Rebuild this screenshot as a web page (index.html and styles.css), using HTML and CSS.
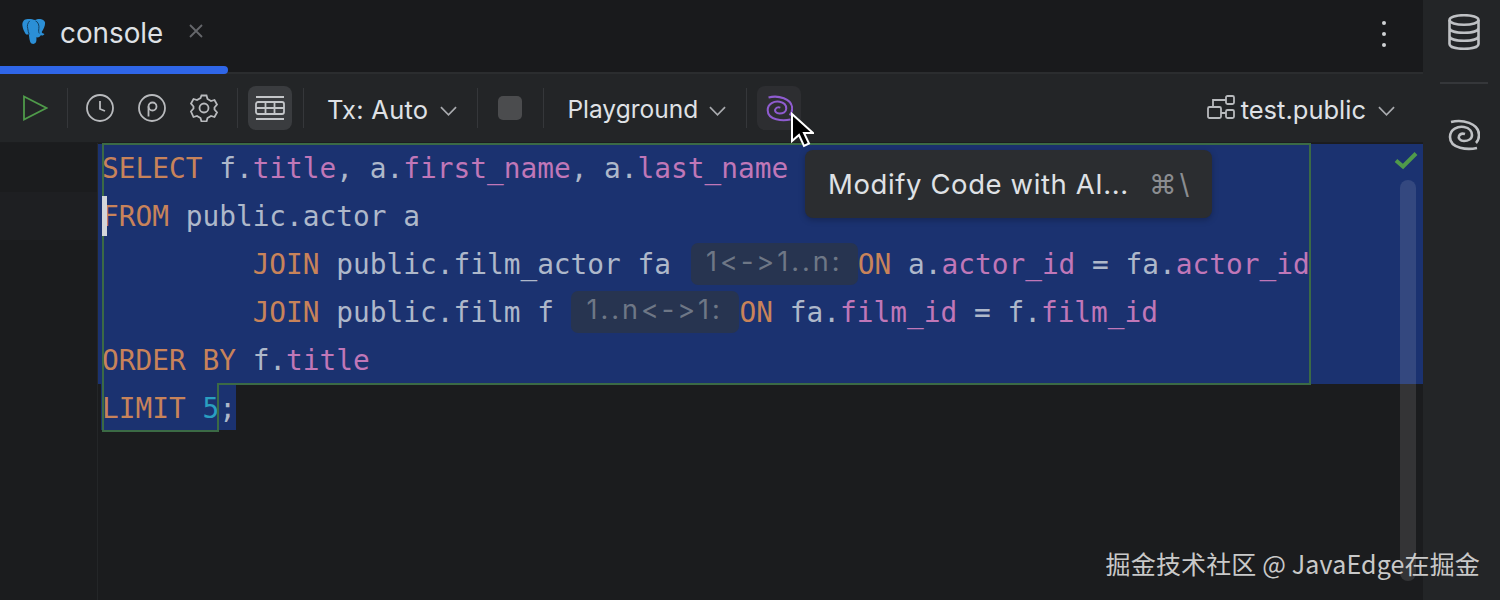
FILE: index.html
```html
<!DOCTYPE html>
<html lang="en">
<head>
<meta charset="utf-8">
<title>console</title>
<link rel="stylesheet" href="styles.css">
</head>
<body>
<div class="app">
  <div class="main">
    <div class="tabbar">
      <div class="tab">
        <svg class="pg" viewBox="0 0 28 28"><path fill="#2b8fd6" d="M7 1C3 1 1 4 1.500 8c.4 3 1.700 6 3 8 1 1.500 2.500 1.500 3.500.5.500 2 .5 5 1.500 8 .8 2.500 4 3 5.500 1.500 1.300-1.300 1-4 1-6 2 .5 4-.5 4.500-2 2 .5 3.500-.5 3.800-1.500-1.500-.5-2.500-1-2.800-2 2-3 3.500-6 3.500-9.500C24.800 2.500 21.500 1 19 1c-2 0-3 .5-4.500 1.200C12.500 1.200 9.500.8 7 1z"/><path fill="none" stroke="#123c5c" stroke-width="1" d="M9 3c-2 2-3 5-2 8 .5 2 .5 4 1.500 6M15 3c3 1 4 5 3.500 8-.3 2-.3 4 .5 5"/></svg>
        <span class="tab-name">console</span>
        <svg class="close" viewBox="0 0 16 16"><path d="M2 2l12 12M14 2L2 14"/></svg>
      </div>
      <div class="spacer"></div>
      <div class="dots"><i></i><i></i><i></i></div>
    </div>
    <div class="toolbar">
      <svg class="ic play" viewBox="0 0 26 26"><path d="M2 1.500L24.500 13 2 24.500z"/></svg>
      <span class="sep s-a"></span>
      <span class="slot"><svg class="ic" viewBox="0 0 28 28"><circle cx="14" cy="14" r="13"/><path d="M14 7v8l5 2"/></svg></span>
      <span class="slot"><svg class="ic" viewBox="0 0 28 28"><circle cx="14" cy="14" r="13"/><path d="M10.500 22.500V12.500"/><circle cx="14.500" cy="12.500" r="4"/></svg></span>
      <span class="slot"><svg class="ic" viewBox="0 0 28 28"><path d="M11.500 1.500h5l1 3.500 3.500 2 3.500-1 2.500 4.500-2.500 3 .0 1-.0 1 2.500 3-2.500 4.500-3.500-1-3.500 2-1 3.500h-5l-1-3.500-3.500-2-3.500 1L1 17.500l2.500-3v-2L1 9.500 3.500 5 7 6l3.500-2z"/><circle cx="14" cy="14" r="4.500"/></svg></span>
      <span class="sep s-b"></span>
      <span class="btn active s-c"><svg class="ic grid" viewBox="0 0 30 26"><path d="M1 2h28M1 24h28M3 7h24a2 2 0 0 1 2 2v8a2 2 0 0 1-2 2H3a2 2 0 0 1-2-2V9a2 2 0 0 1 2-2zM1 13h28M10.500 7v12M19.500 7v12"/></svg></span>
      <span class="sep s-d"></span>
      <span class="label tx s-e">Tx: Auto</span>
      <svg class="chev s-f" viewBox="0 0 18 10"><path d="M1 1l8 8 8-8"/></svg>
      <span class="sep s-g"></span>
      <span class="stop"></span>
      <span class="sep s-l"></span>
      <span class="label pgd s-e">Playground</span>
      <svg class="chev s-h" viewBox="0 0 18 10"><path d="M1 1l8 8 8-8"/></svg>
      <span class="sep s-g"></span>
      <span class="btn hover s-c"><svg class="ic ai" viewBox="0 0 32 32"><path d="M29 29C20 31 2 30 2 18 2 10 10 7 16 8c6 1 8 5 8 8 0 4-4 6-8 6-4 0-6-3-5-5 1-2 3-3 6-2"/><path d="M3 3c11-3 28 1 28 13 0 4-1 6-3 8"/></svg></span>
      <div class="spacer"></div>
      <svg class="ic schema" viewBox="0 0 28 24"><rect x="1" y="12" width="13" height="11" rx="1.500"/><rect x="19" y="1" width="8" height="8" rx="1.500"/><rect x="19" y="15" width="8" height="8" rx="1.500"/><path d="M14 18h5M6 12V5h13"/></svg>
      <span class="label s-i">test.public</span>
      <svg class="chev s-j" viewBox="0 0 18 10"><path d="M1 1l8 8 8-8"/></svg>
    </div>
    <div class="editor">
      <div class="gutter"><div class="gutter-current"></div></div>
      <div class="code">
        <div class="line sel"><b>SELECT</b> f.<u>title</u>, a.<u>first_name</u>, a.<u>last_name</u></div>
        <div class="line sel"><b>FROM</b> public.actor a</div>
        <div class="line sel">         <b>JOIN</b> public.film_actor fa <span class="hint h-a">1&lt;-&gt;1..n:</span><b>ON</b> a.<u>actor_id</u> = fa.<u>actor_id</u></div>
        <div class="line sel">         <b>JOIN</b> public.film f <span class="hint h-b">1..n&lt;-&gt;1:</span><b>ON</b> fa.<u>film_id</u> = f.<u>film_id</u></div>
        <div class="line sel"><b>ORDER BY</b> f.<u>title</u></div>
        <div class="line"><span class="sel-part"><b>LIMIT</b> <em>5</em>;</span></div>
      </div>
      <div class="outline o-top"></div>
      <div class="outline o-bottom"></div>
      <div class="caret"></div>
      <svg class="check" viewBox="0 0 24 18"><path d="M2 9l7 6L22 2"/></svg>
      <div class="scrollbar"></div>
    </div>
  </div>
  <div class="side">
    <svg class="side-ic" viewBox="0 0 32 36"><ellipse cx="16" cy="6" rx="14.500" ry="4.800"/><path d="M1.500 6v24c0 3 6.500 4.800 14.500 4.800S30.500 33 30.500 30V6M1.500 14c0 3 6.500 4.800 14.500 4.800S30.500 17 30.500 14M1.500 22c0 3 6.500 4.800 14.500 4.800S30.500 25 30.500 22"/></svg>
    <div class="side-sep"></div>
    <svg class="side-ic" viewBox="0 0 32 32"><path d="M29 29C20 31 2 30 2 18 2 10 10 7 16 8c6 1 8 5 8 8 0 4-4 6-8 6-4 0-6-3-5-5 1-2 3-3 6-2"/><path d="M3 3c11-3 28 1 28 13 0 4-1 6-3 8"/></svg>
  </div>
  <div class="tooltip"><span class="tip-text">Modify Code with AI...</span><span class="keys">⌘\</span></div>
  <svg class="pointer" viewBox="0 0 24 36"><path d="M2 2v27l7-6 5 11 5-2.500-5-10.500h9z"/></svg>
  <div class="watermark">掘金技术社区 @ JavaEdge在掘金</div>
</div>
</body>
</html>
```
FILE: styles.css
```css
* { box-sizing: border-box; }
html, body { margin: 0; height: 100%; background: #1b1c1e; overflow: hidden; }
.app { position: relative; display: flex; width: 1500px; height: 600px; font-family: Inter, "Liberation Sans", sans-serif; color: #dfe1e5; overflow: hidden; }
.main { width: 1423px; display: flex; flex-direction: column; }
.spacer { flex: 1; }

.tabbar { height: 72px; display: flex; background: #191a1c; }
.tab { position: relative; width: 228px; display: flex; align-items: center; padding: 0 0 6px 21px; }
.tab::after { content: ""; position: absolute; left: 0; right: 0; bottom: -2px; height: 8px; background: #2f66e8; border-radius: 0 4px 4px 0; z-index: 2; }
.pg { width: 27px; height: 27px; margin-top: -4px; }
.tab-name { font-size: 27.800px; margin-left: 12px; }
.close { width: 16px; height: 16px; margin: -4px 0 0 25px; fill: none; stroke: #65676b; stroke-width: 1.800; }
.dots { width: 78px; display: flex; flex-direction: column; align-items: center; gap: 7px; padding: 21px 0 0 0; }
.dots i { width: 4px; height: 4px; border-radius: 50%; background: #cfd1d4; }

.toolbar { height: 71px; display: flex; align-items: center; padding: 0 28px 0 22px; background: #232527; border-top: 2px solid #2b2d2f; border-bottom: 1px solid #1c1d1f; }
.ic { width: 28px; height: 28px; fill: none; stroke: #b8babd; stroke-width: 1.800; flex: none; }
.play { width: 26px; height: 26px; stroke: #4f9a4a; margin-right: 19px; }
.slot { width: 52px; display: flex; justify-content: center; }
.sep { width: 1px; height: 40px; background: #35373a; flex: none; }
.s-a { margin-right: 6px; }
.s-b { margin-left: 7px; }
.s-c { margin-left: 10px; }
.s-d { margin-left: 11px; }
.s-e { margin-left: 23px; }
.s-f { margin: 6px 0 0 12px; }
.s-g { margin: 0 20px; }
.s-l { margin-left: 21px; }
.s-h { margin: 6px 0 0 11px; }
.s-i { margin-left: 6px; }
.s-j { margin: 6px 0 0 12px; }
.btn { width: 44px; height: 44px; border-radius: 8px; display: flex; align-items: center; justify-content: center; flex: none; }
.s-g + .btn { margin-left: -10px; }
.active { background: #3a3c3f; }
.hover { background: #2d2e31; }
.grid { width: 30px; height: 26px; stroke: #c4c6c9; }
.ai { width: 27px; height: 27px; stroke: #8f5cd0; stroke-width: 2.400; }
.label { font-size: 25.500px; color: #dfe1e5; white-space: nowrap; padding-top: 2px; }
.tx { letter-spacing: 0.25px; }
.pgd { font-size: 24.500px; letter-spacing: 0; }
.chev { width: 17px; height: 10px; fill: none; stroke: #a8aaae; stroke-width: 1.800; flex: none; }
.stop { width: 24px; height: 24px; border-radius: 5px; background: #4b4c4e; flex: none; }
.schema { height: 24px; margin-top: -2px; }

.editor { position: relative; flex: 1; display: flex; background: #1b1c1e; }
.gutter { width: 98px; border-right: 1px solid #242628; flex: none; padding-top: 49px; }
.gutter-current { height: 48px; background: #1e1f22; }
.code { flex: 1; padding-top: 1px; font-family: "DejaVu Sans Mono", "Liberation Mono", monospace; font-size: 27.800px; min-width: 0; }
.line { height: 48px; line-height: 50px; white-space: pre; color: #aeb8ca; padding-left: 4px; overflow: hidden; }
.sel { background: #1b3270; }
.sel-part { display: inline-block; margin-left: -1px; padding-left: 1px; background: #1b3270; height: 46px; line-height: 50px; }
.code b { font-weight: 400; color: #c8835a; }
.code u { text-decoration: none; color: #c077b8; }
.code em { font-style: normal; color: #2a9fc0; }
.hint { display: inline-block; height: 42px; line-height: 38px; vertical-align: 3px; border-radius: 7px; background: #273450; color: #6e7786; font-family: Inter, sans-serif; font-size: 27px; letter-spacing: 3px; font-variant-ligatures: none; font-feature-settings: "calt" 0, "liga" 0; text-align: center; white-space: nowrap; }
.h-a { width: 167px; margin: 0 0 0 3px; }
.h-b { width: 168px; margin: 0 1px 0 0; }

.outline { position: absolute; border: 2px solid #3b6a45; pointer-events: none; }
.o-top { left: 102px; top: 0; width: 1209px; height: 242px; }
.o-bottom { left: 102px; top: 242px; width: 117px; height: 47px; border-top: 0; }
.o-bottom::before { content: ""; position: absolute; left: 0; top: -2px; width: 113px; height: 2px; background: #1b3270; }
.caret { position: absolute; left: 102px; top: 53px; width: 5px; height: 40px; background: #d4d6da; }
.check { position: absolute; left: 1394px; top: 8px; width: 24px; height: 19px; fill: none; stroke: #4f9a4a; stroke-width: 4; }
.scrollbar { position: absolute; left: 1400px; top: 37px; width: 16px; height: 401px; border-radius: 8px; background: rgba(255, 255, 255, 0.11); }

.side { flex: 1; background: #232527; display: flex; flex-direction: column; align-items: center; padding: 14px 0 0 5px; }
.side-ic { width: 32px; height: 36px; fill: none; stroke: #bfc1c4; stroke-width: 2.600; flex: none; }
.side-sep { width: 48px; height: 2px; background: #35373a; margin: 32px 0 33px; }

.tooltip { position: absolute; left: 805px; top: 150px; width: 407px; height: 68px; border-radius: 8px; background: #2b2d30; display: flex; align-items: center; padding: 0 0 0 23px; font-size: 27.500px; color: #dfe1e5; white-space: nowrap; box-shadow: 0 2px 6px rgba(0, 0, 0, 0.25); }
.tip-text { letter-spacing: 0.6px; }
.keys { color: #8b8d91; margin-left: 20px; letter-spacing: 3px; }
.pointer { position: absolute; left: 790px; top: 112px; width: 24px; height: 36px; fill: #000; stroke: #fff; stroke-width: 2; }
.watermark { position: absolute; right: 20px; top: 546px; font-family: "Noto Sans CJK SC", sans-serif; font-size: 25px; letter-spacing: 0.15px; line-height: 34px; color: #c9c9c9; white-space: nowrap; }
```
